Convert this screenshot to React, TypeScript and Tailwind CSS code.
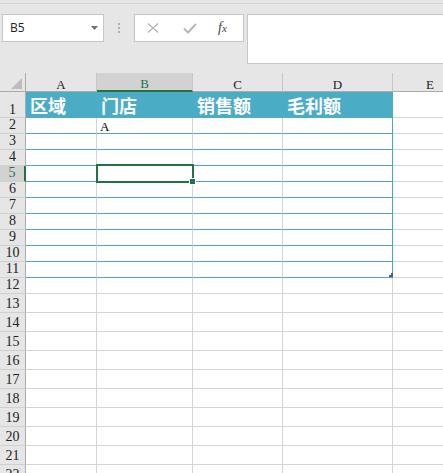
import React from "react";

const WIDTHS = ["w-[71px]", "w-[96px]", "w-[90px]", "w-[110px]"];
const LETTERS = ["A", "B", "C", "D"];
const HEADS = ["区域", "门店", "销售额", "毛利额"];

const serif = "font-['Liberation_Serif','Noto_Sans_CJK_SC',serif]";
const cjk = "font-['Noto_Sans_CJK_SC',sans-serif]";

function RowHead({ n, sel, tall }: { n: number; sel?: boolean; tall?: boolean }) {
  return (
    <div
      className={`w-[26px] shrink-0 flex items-end justify-center border-b border-[#d0d0d0] leading-none text-[14px] ${serif} ${
        sel
          ? "bg-[#d2d2d2] text-[#217346] border-r-2 border-r-[#217346]"
          : "bg-[#e6e6e6] text-[#222] border-r border-r-[#ababab]"
      } ${tall ? "pb-0" : "pb-[1px]"}`}
    >
      {n}
    </div>
  );
}

function Toolbar() {
  return (
    <div className="flex items-start pt-[10px] h-[69px] shrink-0">
      {/* Name box */}
      <div className="ml-[2px] w-[102px] h-[28px] bg-white border border-[#c6c6c6] flex items-center justify-between pl-[7px] pr-[5px]">
        <span className="text-[12px] text-[#222] font-['Open_Sans',sans-serif]">B5</span>
        <svg width="7" height="4" viewBox="0 0 7 4">
          <path d="M0 0 L7 0 L3.5 4 Z" fill="#707070" />
        </svg>
      </div>

      {/* drag dots */}
      <div className="ml-[14px] mt-[9px] w-[2px] flex flex-col gap-[2px]">
        <span className="w-[2px] h-[2px] bg-[#b0b0b0]" />
        <span className="w-[2px] h-[2px] bg-[#b0b0b0]" />
        <span className="w-[2px] h-[2px] bg-[#b0b0b0]" />
      </div>

      {/* cancel / enter / fx */}
      <div className="ml-[14px] w-[110px] h-[28px] bg-white border border-[#c6c6c6] flex items-center">
        <svg className="ml-[12px]" width="12" height="10" viewBox="0 0 12 10">
          <path d="M1 0.5 L11 9.5 M11 0.5 L1 9.5" stroke="#b5b5b5" strokeWidth="1.3" fill="none" />
        </svg>
        <svg className="ml-[24px]" width="14" height="11" viewBox="0 0 14 11">
          <path d="M1 5.5 L5 9.5 L13 1" stroke="#b8b8b8" strokeWidth="2" fill="none" />
        </svg>
        <span className="ml-[21px] italic text-[#444] font-['Liberation_Serif',serif] text-[14px] leading-none">
          f<span className="text-[11px]">x</span>
        </span>
      </div>

      {/* formula input */}
      <div className="ml-[3px] flex-1 h-[50px] bg-white border border-r-0 border-[#c6c6c6]" />
    </div>
  );
}

function ColumnHeader() {
  return (
    <div className="flex h-[19px] shrink-0">
      <div className="w-[26px] shrink-0 border-r border-b border-[#ababab] bg-[#e6e6e6] relative">
        <svg className="absolute right-[3px] bottom-[2px]" width="11" height="11" viewBox="0 0 11 11">
          <path d="M11 0 L11 11 L0 11 Z" fill="#bdbdbd" />
        </svg>
      </div>
      {LETTERS.map((l, i) => (
        <div
          key={l}
          className={`${WIDTHS[i]} shrink-0 flex items-end justify-center leading-none text-[13px] border-r border-r-[#c6c6c6] ${serif} ${
            l === "B"
              ? "bg-[#d2d2d2] text-[#217346] border-b-2 border-b-[#217346]"
              : "bg-[#e6e6e6] text-[#222] border-b border-b-[#ababab]"
          }`}
        >
          {l}
        </div>
      ))}
      <div className={`flex-1 flex items-end pl-[33px] leading-none text-[13px] bg-[#e6e6e6] text-[#222] border-b border-[#ababab] ${serif}`}>
        E
      </div>
    </div>
  );
}

function TitleRow() {
  return (
    <div className="flex h-[26px] shrink-0">
      <RowHead n={1} tall />
      {HEADS.map((t, i) => (
        <div
          key={t}
          className={`${WIDTHS[i]} shrink-0 bg-[#4bacc6] flex items-center pl-[4px] text-white font-bold text-[18px] leading-none ${cjk}`}
        >
          {t}
        </div>
      ))}
      <div className="flex-1 bg-white border-b border-[#d4d4d4]" />
    </div>
  );
}

function Row({ n }: { n: number }) {
  const inTable = n >= 2 && n <= 11;
  const h = n <= 12 ? "h-[16px]" : "h-[19px]";
  return (
    <div className={`flex shrink-0 ${h}`}>
      <RowHead n={n} sel={n === 5} />
      {WIDTHS.map((w, i) => {
        let border = "border-r border-b border-[#d4d4d4]";
        if (inTable) {
          border =
            i === 3
              ? "border-r border-b border-[#4ba6c4]"
              : "border-r border-b border-r-[#d4d4d4] border-b-[#4ba6c4]";
        }
        return (
          <div key={i} className={`${w} shrink-0 bg-white relative ${border}`}>
            {n === 2 && i === 1 && (
              <div className={`h-full flex items-end pl-[3px] text-[13px] leading-none text-black ${serif}`}>A</div>
            )}
            {n === 5 && i === 1 && (
              <>
                <div className="absolute -left-[1px] -top-[2px] w-[98px] h-[19px] border-2 border-[#217346] z-10" />
                <div className="absolute left-[92px] top-[12px] w-[7px] h-[7px] bg-[#217346] border border-white z-20" />
              </>
            )}
            {n === 11 && i === 3 && (
              <svg className="absolute -right-[1px] bottom-0" width="4" height="4" viewBox="0 0 4 4">
                <rect x="2" y="0" width="2" height="2" fill="#4a58a8" />
                <rect x="0" y="2" width="4" height="2" fill="#4a58a8" />
              </svg>
            )}
          </div>
        );
      })}
      <div className="flex-1 bg-white border-b border-[#d4d4d4]" />
    </div>
  );
}

export default function App() {
  const rows = Array.from({ length: 21 }, (_, i) => i + 2);
  return (
    <div className="w-[443px] h-[473px] overflow-hidden bg-[#e6e6e6] flex flex-col">
      <div className="h-[4px] shrink-0 border-b border-[#d6d6d6]" />
      <Toolbar />
      <ColumnHeader />
      <TitleRow />
      {rows.map((n) => (
        <Row key={n} n={n} />
      ))}
    </div>
  );
}
